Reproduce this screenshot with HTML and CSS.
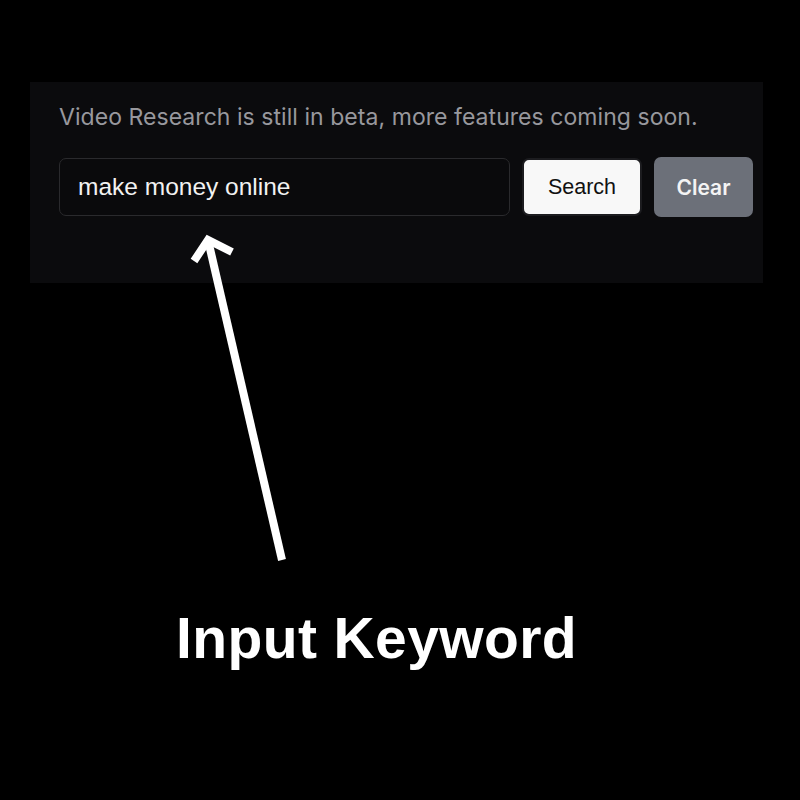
FILE: index.html
```html
<!DOCTYPE html>
<html>
<head>
<meta charset="utf-8">
<link rel="stylesheet" href="styles.css">
</head>
<body>
<div class="page">
  <section class="panel">
    <p class="note">Video Research is still in beta, more features coming soon.</p>
    <div class="row">
      <div class="field">make money online</div>
      <button class="btn btn-search">Search</button>
      <button class="btn btn-clear">Clear</button>
    </div>
  </section>
  <svg class="arrow" width="800" height="800" viewBox="0 0 800 800">
    <g stroke="#ffffff" stroke-width="8" fill="none" stroke-linecap="butt" stroke-linejoin="miter">
      <path d="M282 560 L208 240"/>
      <path d="M194 261 L208 240 L232 252"/>
    </g>
  </svg>
  <h1 class="caption">Input Keyword</h1>
</div>
</body>
</html>
```
FILE: styles.css
```css
html, body {
  margin: 0;
  padding: 0;
  background: #000000;
}
.page {
  position: relative;
  width: 800px;
  height: 800px;
  padding-top: 82px;
  box-sizing: border-box;
}
.panel {
  margin-left: 30px;
  width: 733px;
  height: 201px;
  background: #0b0b0d;
  box-sizing: border-box;
  padding: 21px 0 0 29px;
}
.note {
  margin: 0;
  font-family: Inter, "Noto Sans", sans-serif;
  font-size: 23px;
  line-height: 28px;
  letter-spacing: 0.05px;
  color: #98989d;
}
.row {
  display: flex;
  align-items: center;
  margin-top: 26px;
}
.field {
  width: 451px;
  height: 58px;
  box-sizing: border-box;
  border: 1.5px solid #2a2a2d;
  border-radius: 7px;
  background: #0a0a0c;
  padding-left: 18px;
  display: flex;
  align-items: center;
  font-family: "Liberation Sans", Arial, sans-serif;
  font-size: 24.5px;
  color: #f2f2f2;
}
.btn {
  font-family: "Liberation Sans", Arial, sans-serif;
  border-radius: 7px;
  cursor: pointer;
  padding: 0;
}
.btn-search {
  margin-left: 12px;
  width: 120px;
  height: 58px;
  background: #f8f8f8;
  color: #111111;
  border: 2px solid #1c1c1f;
  font-size: 21.5px;
  font-weight: 400;
}
.btn-clear {
  margin-left: 12px;
  width: 99px;
  height: 60px;
  background: #6c7079;
  color: #f4f4f4;
  border: none;
  font-family: Inter, "Liberation Sans", sans-serif;
  font-weight: 600;
  font-size: 21px;
}
.arrow {
  position: absolute;
  left: 0;
  top: 0;
  pointer-events: none;
}
.caption {
  margin: 320px 0 0 176px;
  font-family: "Liberation Sans", Arial, sans-serif;
  font-weight: 700;
  font-size: 57px;
  line-height: 70px;
  letter-spacing: 0.4px;
  color: #ffffff;
}
```
